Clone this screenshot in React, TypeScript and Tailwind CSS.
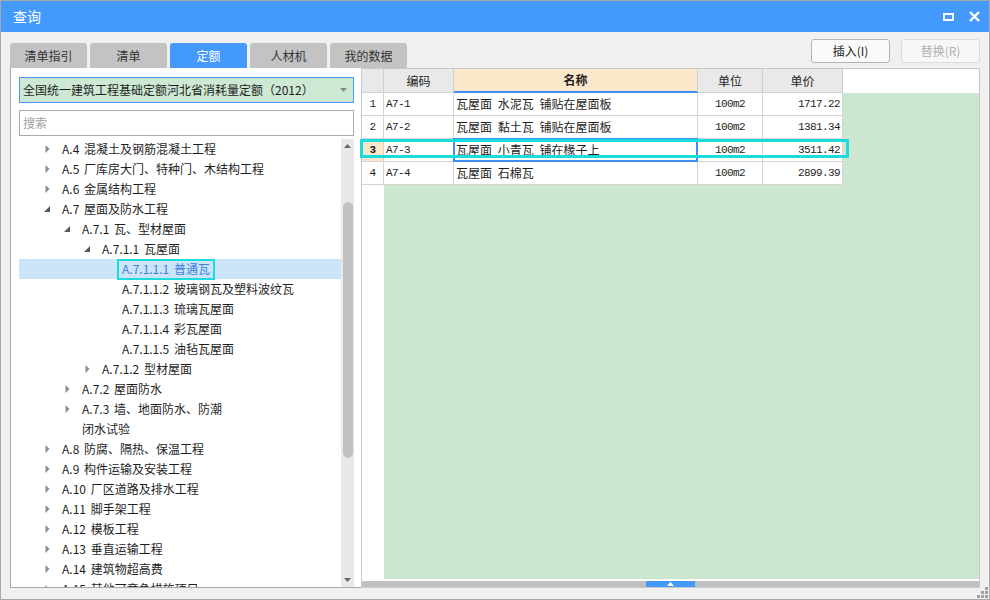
import React from "react";

type Node = {
  label: string;
  level: number;
  arrow: "c" | "e" | null;
  selected?: boolean;
};

const tree: Node[] = [
  { label: "A.4 混凝土及钢筋混凝土工程", level: 0, arrow: "c" },
  { label: "A.5 厂库房大门、特种门、木结构工程", level: 0, arrow: "c" },
  { label: "A.6 金属结构工程", level: 0, arrow: "c" },
  { label: "A.7 屋面及防水工程", level: 0, arrow: "e" },
  { label: "A.7.1 瓦、型材屋面", level: 1, arrow: "e" },
  { label: "A.7.1.1 瓦屋面", level: 2, arrow: "e" },
  { label: "A.7.1.1.1 普通瓦", level: 3, arrow: null, selected: true },
  { label: "A.7.1.1.2 玻璃钢瓦及塑料波纹瓦", level: 3, arrow: null },
  { label: "A.7.1.1.3 琉璃瓦屋面", level: 3, arrow: null },
  { label: "A.7.1.1.4 彩瓦屋面", level: 3, arrow: null },
  { label: "A.7.1.1.5 油毡瓦屋面", level: 3, arrow: null },
  { label: "A.7.1.2 型材屋面", level: 2, arrow: "c" },
  { label: "A.7.2 屋面防水", level: 1, arrow: "c" },
  { label: "A.7.3 墙、地面防水、防潮", level: 1, arrow: "c" },
  { label: "闭水试验", level: 1, arrow: null },
  { label: "A.8 防腐、隔热、保温工程", level: 0, arrow: "c" },
  { label: "A.9 构件运输及安装工程", level: 0, arrow: "c" },
  { label: "A.10 厂区道路及排水工程", level: 0, arrow: "c" },
  { label: "A.11 脚手架工程", level: 0, arrow: "c" },
  { label: "A.12 模板工程", level: 0, arrow: "c" },
  { label: "A.13 垂直运输工程", level: 0, arrow: "c" },
  { label: "A.14 建筑物超高费", level: 0, arrow: "c" },
  { label: "A.15 其他可竞争措施项目", level: 0, arrow: "c" },
];

const rows = [
  { no: "1", code: "A7-1", name: "瓦屋面 水泥瓦 铺贴在屋面板", unit: "100m2", price: "1717.22" },
  { no: "2", code: "A7-2", name: "瓦屋面 黏土瓦 铺贴在屋面板", unit: "100m2", price: "1381.34" },
  { no: "3", code: "A7-3", name: "瓦屋面 小青瓦 铺在椽子上", unit: "100m2", price: "3511.42" },
  { no: "4", code: "A7-4", name: "瓦屋面 石棉瓦", unit: "100m2", price: "2899.39" },
];

const tabs = ["清单指引", "清单", "定额", "人材机", "我的数据"];

const paddings = ["pl-[22px]", "pl-[42px]", "pl-[62px]", "pl-[82px]"];

function Arrow({ kind }: { kind: "c" | "e" | null }) {
  if (kind === "c") {
    return (
      <svg width="5" height="8" viewBox="0 0 5 8">
        <path d="M0.5 0L4.5 4L0.5 8Z" fill="#8c8c8c" />
      </svg>
    );
  }
  if (kind === "e") {
    return (
      <svg width="6" height="6" viewBox="0 0 6 6">
        <path d="M6 0L6 6L0 6Z" fill="#5a5a5a" />
      </svg>
    );
  }
  return null;
}

const mono = "font-['Liberation_Mono',monospace] text-[11px] tracking-[-0.6px]";

export default function App() {
  return (
    <div className="relative w-[990px] h-[600px] flex flex-col bg-[#f0f0f0] border border-[#a8a8a8] overflow-hidden font-['Noto_Sans_CJK_SC',sans-serif] text-[12px] text-[#1e1e1e]">
      {/* 标题栏 */}
      <div className="h-[31px] bg-[#4499ff] flex items-center justify-between pl-[12px] pr-[9px] text-white">
        <span className="text-[14px]">查询</span>
        <div className="flex items-center gap-[15px]">
          <div className="w-[11px] h-[8px] border-2 border-white" />
          <svg width="11" height="11" viewBox="0 0 11 11">
            <path d="M1 1L10 10M10 1L1 10" stroke="white" strokeWidth={2.4} />
          </svg>
        </div>
      </div>

      {/* 页签和按钮 */}
      <div className="mt-[7px] h-[29px] flex justify-between pl-[9px] pr-[9px]">
        <div className="flex items-end gap-[3px]">
          {tabs.map((t) => (
            <div
              key={t}
              className={`w-[77px] h-[25px] rounded-t-[3px] flex items-center justify-center text-[12px] ${
                t === "定额" ? "bg-[#4499ff] text-white" : "bg-[#c3c3c3] text-[#333]"
              }`}
            >
              {t}
            </div>
          ))}
        </div>
        <div className="flex items-start gap-[11px]">
          <button className="w-[79px] h-[24px] rounded-[3px] border border-[#b4b4b4] bg-[#fafafa] text-[12px] text-[#222]">
            插入(I)
          </button>
          <button className="w-[79px] h-[24px] rounded-[3px] border border-[#dadada] bg-[#f7f7f7] text-[12px] text-[#b0b0b0]">
            替换(R)
          </button>
        </div>
      </div>

      {/* 内容区 */}
      <div className="h-[520px] flex mx-[9px]">
        {/* 左侧树 */}
        <div className="w-[351px] bg-white border-l border-b border-[#a8a8a8] flex flex-col pt-[9px] pl-[8px]">
          <div className="w-[335px] h-[26px] border border-[#4499ff] bg-[#cde8d3] flex items-center justify-between pl-[3px] pr-[6px]">
            <span>全国统一建筑工程基础定额河北省消耗量定额（2012）</span>
            <svg width="7" height="4" viewBox="0 0 7 4">
              <path d="M0 0H7L3.5 4Z" fill="#8a8a8a" />
            </svg>
          </div>
          <div className="mt-[7px] w-[335px] h-[26px] border border-[#ababab] bg-white flex items-center pl-[3px] text-[#a0a0a0]">
            搜索
          </div>
          <div className="mt-[3px] flex-1 flex min-h-0">
            <div className="w-[322px] overflow-hidden [word-spacing:2px]">
              {tree.map((n) => (
                <div
                  key={n.label}
                  className={`h-[20px] flex items-center ${paddings[n.level]} ${
                    n.selected ? "bg-[#cce4f7]" : ""
                  }`}
                >
                  <div className="w-[12px] flex justify-center">
                    <Arrow kind={n.arrow} />
                  </div>
                  {n.selected ? (
                    <span className="ml-[4px] h-[21px] flex items-center border-2 border-[#1adcdc] px-[3px] text-[#3a7fe3]">
                      {n.label}
                    </span>
                  ) : (
                    <span className="ml-[9px] whitespace-nowrap">{n.label}</span>
                  )}
                </div>
              ))}
            </div>
            <div className="w-[13px] bg-[#e8e8e8] flex flex-col items-center">
              <div className="h-[14px] flex items-center">
                <svg width="7" height="4" viewBox="0 0 7 4">
                  <path d="M0 4H7L3.5 0Z" fill="#666" />
                </svg>
              </div>
              <div className="h-[49px]" />
              <div className="w-[10px] h-[256px] rounded-full bg-[#c1c1c1]" />
              <div className="flex-1" />
              <div className="h-[14px] flex items-center">
                <svg width="7" height="4" viewBox="0 0 7 4">
                  <path d="M0 0H7L3.5 4Z" fill="#666" />
                </svg>
              </div>
            </div>
          </div>
        </div>

        {/* 右侧表格 */}
        <div className="flex-1 bg-white border border-[#c8c8c8] flex flex-col">
          <div className="h-[24px] flex bg-[#e9e9e9]">
            <div className="w-[22px] border-r border-b border-[#d0d0d0]" />
            <div className="w-[70px] border-r border-b border-[#d0d0d0] flex items-center justify-center">编码</div>
            <div className="w-[244px] border-r border-b-2 border-r-[#d0d0d0] border-b-[#3d8ef5] bg-[#fde7cb] flex items-center justify-center font-bold">
              名称
            </div>
            <div className="w-[65px] border-r border-b border-[#d0d0d0] flex items-center justify-center">单位</div>
            <div className="w-[80px] border-r border-b border-[#d0d0d0] flex items-center justify-center">单价</div>
            <div className="flex-1 bg-white" />
          </div>
          {rows.map((r) => {
            const sel = r.no === "3";
            return (
              <div key={r.no} className="relative h-[23px] flex">
                <div
                  className={`w-[22px] border-r border-b border-[#d4d4d4] flex items-center justify-center ${mono} ${
                    sel ? "bg-[#fde7cb] font-bold" : "bg-white"
                  }`}
                >
                  {r.no}
                </div>
                <div className={`w-[70px] border-r border-b border-[#d4d4d4] flex items-center pl-[2px] ${mono}`}>
                  {r.code}
                </div>
                <div className="relative w-[244px] border-r border-b border-[#d4d4d4] flex items-center pl-[2px] [word-spacing:3px]">
                  {r.name}
                  {sel && <div className="absolute -left-[1px] -top-[1px] w-[245px] h-[24px] border-2 border-[#3d8ef5]" />}
                </div>
                <div className={`w-[65px] border-r border-b border-[#d4d4d4] flex items-center justify-center ${mono}`}>
                  {r.unit}
                </div>
                <div className={`w-[80px] border-r border-b border-[#d4d4d4] flex items-center justify-end pr-[2px] ${mono}`}>
                  {r.price}
                </div>
                <div className="flex-1 bg-[#cde6cf]" />
                {sel && (
                  <div className="absolute -left-[2px] top-0 w-[489px] h-[19px] border-[3px] border-[#1adcdc]" />
                )}
              </div>
            );
          })}
          <div className="flex-1 flex">
            <div className="w-[22px] bg-white" />
            <div className="flex-1 bg-[#cde6cf]" />
          </div>
          <div className="h-[2px] bg-white" />
          <div className="h-[6px] bg-[#c0c0c0] flex">
            <div className="w-[284px]" />
            <div className="w-[49px] bg-[#4499ff] flex items-center justify-center">
              <svg width="7" height="4" viewBox="0 0 7 4">
                <path d="M0 4H7L3.5 0Z" fill="white" />
              </svg>
            </div>
          </div>
        </div>
      </div>

      {/* 右下角拖拽 */}
      <svg className="absolute right-[1px] bottom-[1px]" width="11" height="11" viewBox="0 0 11 11">
        <rect x="8" y="0" width="3" height="3" fill="#a0a0a0" />
        <rect x="4" y="4" width="3" height="3" fill="#a0a0a0" />
        <rect x="8" y="4" width="3" height="3" fill="#a0a0a0" />
        <rect x="0" y="8" width="3" height="3" fill="#a0a0a0" />
        <rect x="4" y="8" width="3" height="3" fill="#a0a0a0" />
        <rect x="8" y="8" width="3" height="3" fill="#a0a0a0" />
      </svg>
    </div>
  );
}
